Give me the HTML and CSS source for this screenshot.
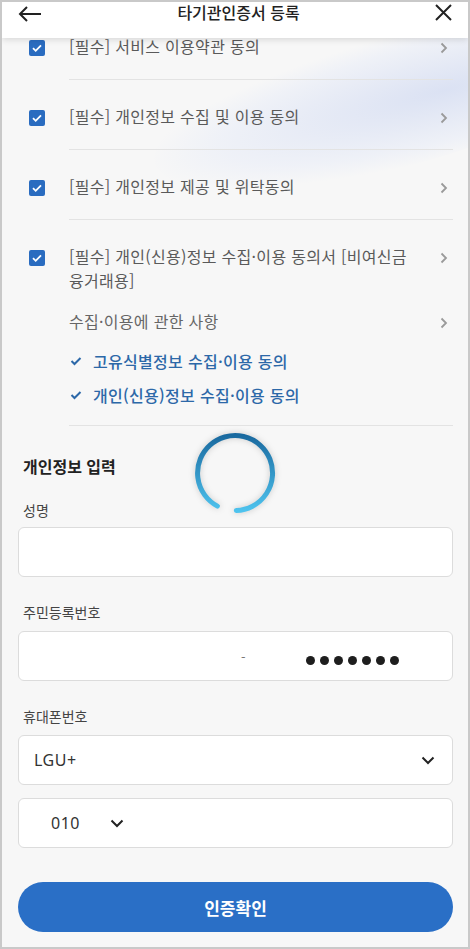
FILE: index.html
```html
<!DOCTYPE html>
<html lang="ko">
<head>
  <meta charset="UTF-8" />
  <meta name="viewport" content="width=device-width, initial-scale=1.0"/>
  <title>타기관인증서 등록</title>
  <link rel="stylesheet" href="styles.css">
</head>
<body>
  <div class="frame">
    <div class="swoosh"></div>

    <header class="topbar">
      <svg class="back" width="24" height="16" viewBox="0 0 24 16"><path d="M23 8H2M9 1L2 8l7 7" fill="none" stroke="#222" stroke-width="2"/></svg>
      <h1>타기관인증서 등록</h1>
      <svg class="close" width="17" height="17" viewBox="0 0 17 17"><path d="M1 1l15 15M16 1L1 16" fill="none" stroke="#222" stroke-width="2"/></svg>
    </header>

    <div class="agree-list">
      <div class="agree-item">
        <span class="checkbox"><svg width="16" height="16" viewBox="0 0 16 16"><path d="M4 8.2l2.7 2.6L12 5.4" fill="none" stroke="#fff" stroke-width="1.8"/></svg></span>
        <div class="agree-body">
          <div class="agree-row">
            <p class="agree-text">[필수] 서비스 이용약관 동의</p>
            <svg class="chev" width="8" height="12" viewBox="0 0 8 12"><path d="M1.5 1.5L6 6l-4.5 4.5" fill="none" stroke="#9a9a9a" stroke-width="1.8"/></svg>
          </div>
        </div>
      </div>
      <div class="agree-item">
        <span class="checkbox"><svg width="16" height="16" viewBox="0 0 16 16"><path d="M4 8.2l2.7 2.6L12 5.4" fill="none" stroke="#fff" stroke-width="1.8"/></svg></span>
        <div class="agree-body">
          <div class="agree-row">
            <p class="agree-text">[필수] 개인정보 수집 및 이용 동의</p>
            <svg class="chev" width="8" height="12" viewBox="0 0 8 12"><path d="M1.5 1.5L6 6l-4.5 4.5" fill="none" stroke="#9a9a9a" stroke-width="1.8"/></svg>
          </div>
        </div>
      </div>
      <div class="agree-item">
        <span class="checkbox"><svg width="16" height="16" viewBox="0 0 16 16"><path d="M4 8.2l2.7 2.6L12 5.4" fill="none" stroke="#fff" stroke-width="1.8"/></svg></span>
        <div class="agree-body">
          <div class="agree-row">
            <p class="agree-text">[필수] 개인정보 제공 및 위탁동의</p>
            <svg class="chev" width="8" height="12" viewBox="0 0 8 12"><path d="M1.5 1.5L6 6l-4.5 4.5" fill="none" stroke="#9a9a9a" stroke-width="1.8"/></svg>
          </div>
        </div>
      </div>
      <div class="agree-item">
        <span class="checkbox"><svg width="16" height="16" viewBox="0 0 16 16"><path d="M4 8.2l2.7 2.6L12 5.4" fill="none" stroke="#fff" stroke-width="1.8"/></svg></span>
        <div class="agree-body agree-body-last">
          <div class="agree-row">
            <p class="agree-text agree-text-wrap">[필수] 개인(신용)정보 수집·이용 동의서 [비여신금융거래용]</p>
            <svg class="chev" width="8" height="12" viewBox="0 0 8 12"><path d="M1.5 1.5L6 6l-4.5 4.5" fill="none" stroke="#9a9a9a" stroke-width="1.8"/></svg>
          </div>
          <div class="agree-row sub-title">
            <p class="agree-text">수집·이용에 관한 사항</p>
            <svg class="chev" width="8" height="12" viewBox="0 0 8 12"><path d="M1.5 1.5L6 6l-4.5 4.5" fill="none" stroke="#9a9a9a" stroke-width="1.8"/></svg>
          </div>
          <div class="sub-check first">
            <svg width="12" height="10" viewBox="0 0 12 10"><path d="M1.5 5l3 3L10.5 2" fill="none" stroke="#2c68a8" stroke-width="2"/></svg>
            <span>고유식별정보 수집·이용 동의</span>
          </div>
          <div class="sub-check">
            <svg width="12" height="10" viewBox="0 0 12 10"><path d="M1.5 5l3 3L10.5 2" fill="none" stroke="#2c68a8" stroke-width="2"/></svg>
            <span>개인(신용)정보 수집·이용 동의</span>
          </div>
        </div>
      </div>
    </div>

    <section class="info">
      <h2>개인정보 입력</h2>

      <div class="field">
        <label>성명</label>
        <div class="input-box"></div>
      </div>

      <div class="field">
        <label>주민등록번호</label>
        <div class="input-box rrn">
          <span class="dash">-</span>
          <span class="dots"><i></i><i></i><i></i><i></i><i></i><i></i><i></i></span>
        </div>
      </div>

      <div class="field">
        <label>휴대폰번호</label>
        <div class="input-box select">
          <span>LGU+</span>
          <svg width="14" height="9" viewBox="0 0 14 9"><path d="M1.5 1.5L7 7l5.5-5.5" fill="none" stroke="#222" stroke-width="2"/></svg>
        </div>
        <div class="input-box phone">
          <span>010</span>
          <svg width="14" height="9" viewBox="0 0 14 9"><path d="M1.5 1.5L7 7l5.5-5.5" fill="none" stroke="#222" stroke-width="2"/></svg>
        </div>
      </div>

      <button class="confirm">인증확인</button>
    </section>

    <div class="spinner">
      <svg width="90" height="90" viewBox="0 0 90 90">
        <defs>
          <linearGradient id="spin" gradientUnits="userSpaceOnUse" x1="0" y1="7" x2="0" y2="83">
            <stop offset="0" stop-color="#19699f"/>
            <stop offset="1" stop-color="#4ec3ee"/>
          </linearGradient>
        </defs>
        <path d="M27.4 78.1A37.5 37.5 0 1 1 46.3 82.5" fill="none" stroke="url(#spin)" stroke-width="5" stroke-linecap="round"/>
      </svg>
    </div>
  </div>
</body>
</html>
```

FILE: styles.css
```css
body {
  margin: 0;
  padding: 0;
  font-family: 'Noto Sans CJK KR', 'Noto Sans', sans-serif;
  background: #fff;
}

.frame {
  position: relative;
  width: 470px;
  height: 949px;
  box-sizing: border-box;
  border: 2px solid #c9c9c9;
  background: #f7f7f7;
  overflow: hidden;
}

/* faint blue wave behind the top rows */
.swoosh {
  position: absolute;
  top: 40px;
  right: -140px;
  width: 460px;
  height: 130px;
  border-radius: 50%;
  background: radial-gradient(ellipse at 65% 50%, rgba(196, 208, 240, 0.55), rgba(220, 228, 248, 0.3) 55%, rgba(247, 247, 247, 0) 72%);
  transform: rotate(-14deg);
}

.topbar {
  position: absolute;
  top: -2px;
  left: 0;
  right: 0;
  height: 38px;
  background: #fff;
  box-shadow: 0 2px 6px rgba(0, 0, 0, 0.12);
  display: flex;
  align-items: flex-start;
  z-index: 2;
}

.topbar h1 {
  flex: 1;
  margin: 0;
  text-align: center;
  font-size: 16px;
  font-weight: 500;
  line-height: 24px;
  color: #222;
}

.back {
  margin: 6px 0 0 16px;
}

.close {
  margin: 4px 16px 0 0;
}

.agree-list {
  position: relative;
  padding: 8px 15px 0 27px;
}

.agree-item {
  display: flex;
  align-items: flex-start;
}

.checkbox {
  width: 16px;
  height: 16px;
  margin: 30px 24px 0 0;
  background: #2a6cc0;
  border-radius: 2px;
  flex-shrink: 0;
}

.checkbox svg {
  display: block;
}

.agree-body {
  flex: 1;
  padding: 24px 0 21px;
  border-bottom: 1px solid #e3e3e3;
}

.agree-body-last {
  padding-bottom: 18px;
}

.agree-row {
  display: flex;
  align-items: flex-start;
}

.agree-text {
  flex: 1;
  margin: 0;
  font-size: 16px;
  letter-spacing: 0.3px;
  line-height: 24px;
  color: #5a5a5a;
}

.agree-text-wrap {
  flex: none;
  width: 346px;
}

.chev {
  margin: 8px 5px 0 auto;
}

.sub-title {
  margin-top: 17px;
}

.sub-title .agree-text {
  color: #666;
}

.sub-check {
  display: flex;
  align-items: center;
  margin-top: 10px;
  font-size: 16px;
  letter-spacing: 0.3px;
  line-height: 24px;
  font-weight: 500;
  color: #2c68a8;
}

.sub-check.first {
  margin-top: 16px;
}

.sub-check svg {
  margin: 0 11px 0 1px;
}

.info {
  padding: 28px 15px 0 16px;
}

.info h2 {
  margin: 0 0 22px 5px;
  font-size: 16px;
  font-weight: 700;
  line-height: 24px;
  color: #222;
}

.field {
  margin-bottom: 25px;
}

.field label {
  display: block;
  margin: 0 0 9px 5px;
  font-size: 14px;
  line-height: 20px;
  color: #444;
}

.field:first-of-type label {
  margin-bottom: 7px;
}

.input-box {
  height: 50px;
  box-sizing: border-box;
  background: #fff;
  border: 1px solid #dcdcdc;
  border-radius: 6px;
  display: flex;
  align-items: center;
}

.rrn .dash {
  margin-left: 222px;
  font-size: 13px;
  color: #777;
}

.rrn .dots {
  display: flex;
  gap: 5px;
  margin: 8px 0 0 60px;
}

.rrn .dots i {
  width: 9px;
  height: 9px;
  border-radius: 50%;
  background: #1e1e1e;
}

.select,
.phone {
  font-family: 'Noto Sans', sans-serif;
  font-size: 16px;
  letter-spacing: 0.5px;
  color: #333;
}

.select {
  padding: 0 17px 0 15px;
  justify-content: space-between;
  margin-bottom: 13px;
}

.phone {
  padding-left: 32px;
}

.phone svg {
  margin-left: 30px;
}

.confirm {
  display: block;
  width: 100%;
  height: 50px;
  margin-top: 34px;
  border: none;
  border-radius: 25px;
  background: #2a6fc6;
  color: #fff;
  font-family: 'Noto Sans CJK KR', sans-serif;
  font-size: 17px;
  font-weight: 700;
}

.spinner {
  position: absolute;
  left: 188px;
  top: 426px;
  filter: drop-shadow(0 0 3px rgba(0, 0, 0, 0.18));
}

.spinner svg {
  display: block;
}
```
